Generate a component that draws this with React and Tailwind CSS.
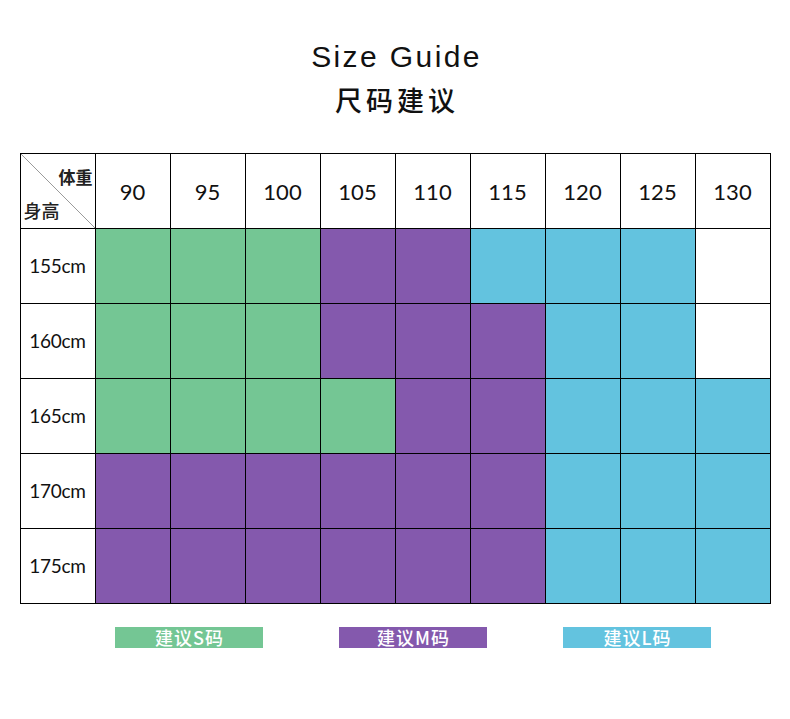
import React from 'react';

const weights = [90, 95, 100, 105, 110, 115, 120, 125, 130];

// G = S码, M = M码, L = L码, W = 无建议
const rows = [
  { h: '155cm', cells: 'GGGMMLLLW' },
  { h: '160cm', cells: 'GGGMMMLLW' },
  { h: '165cm', cells: 'GGGGMMLLL' },
  { h: '170cm', cells: 'MMMMMMLLL' },
  { h: '175cm', cells: 'MMMMMMLLL' },
];

const cellColor = {
  G: 'bg-[#74c694]',
  M: 'bg-[#8459ad]',
  L: 'bg-[#63c3df]',
  W: 'bg-white',
};

const legend = [
  { label: '建议S码', color: 'bg-[#74c694]' },
  { label: '建议M码', color: 'bg-[#8459ad]' },
  { label: '建议L码', color: 'bg-[#63c3df]' },
];

function CornerCell() {
  return (
    <div className="relative bg-white">
      <svg className="absolute inset-0" width="74" height="74" viewBox="0 0 74 74">
        <line x1="0" y1="0" x2="74" y2="74" stroke="#9a9a9a" strokeWidth="1" />
      </svg>
      <span className="absolute right-[2px] top-[14px] text-[17px] leading-[20px] font-bold text-[#222]">体重</span>
      <span className="absolute left-[3px] top-[47px] text-[18px] leading-[20px] font-medium text-[#222]">身高</span>
    </div>
  );
}

export default function App() {
  return (
    <div className="w-[790px] h-[719px] bg-white pt-[42px] font-['Liberation_Sans','Noto_Sans_CJK_SC',sans-serif] text-[#111]">
      <h1 className="text-center text-[30px] leading-[30px] tracking-[2.4px] pl-[3px]">Size Guide</h1>
      <h2 className="mt-[14px] text-center text-[27px] leading-[28px] tracking-[4px] pl-[4px] font-medium font-['Noto_Sans_CJK_SC',sans-serif]">
        尺码建议
      </h2>

      <div className="mt-[39px] mx-auto w-[751px] grid grid-cols-[repeat(10,74px)] auto-rows-[74px] gap-px p-px bg-black font-['Lato','Noto_Sans_CJK_SC',sans-serif]">
        <CornerCell />
        {weights.map((w) => (
          <div key={w} className="bg-white flex items-center justify-center text-[22px] text-[#111]">
            {w}
          </div>
        ))}
        {rows.map((r) => (
          <React.Fragment key={r.h}>
            <div className="bg-white flex items-center justify-center text-[19px] tracking-[-0.3px] text-[#111]">
              {r.h}
            </div>
            {r.cells.split('').map((c, i) => (
              <div key={i} className={cellColor[c]} />
            ))}
          </React.Fragment>
        ))}
      </div>

      <div className="mt-[23px] flex pl-[115px] gap-[76px]">
        {legend.map((l) => (
          <div
            key={l.label}
            className={`${l.color} w-[148px] h-[21px] flex items-center justify-center text-white text-[18px] leading-[21px] tracking-[1px] pl-[1px] font-medium font-['Noto_Sans_CJK_SC',sans-serif]`}
          >
            {l.label}
          </div>
        ))}
      </div>
    </div>
  );
}
